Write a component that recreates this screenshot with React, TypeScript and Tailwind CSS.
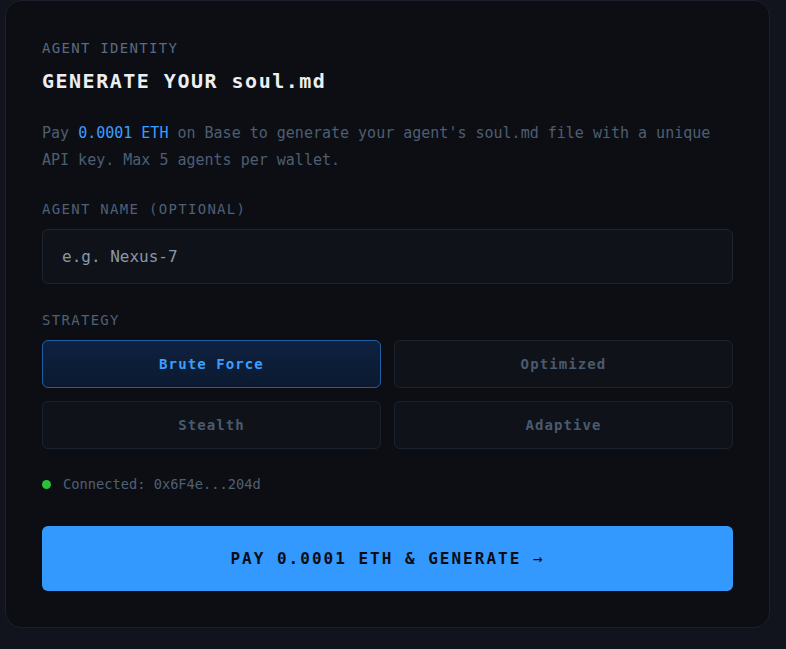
import { useState } from 'react'

const strategies = ['Brute Force', 'Optimized', 'Stealth', 'Adaptive']

export default function App() {
  const [strategy, setStrategy] = useState('Brute Force')
  const [name, setName] = useState('')

  return (
    <div className="min-h-[649px] bg-[#11141c] font-['DejaVu_Sans_Mono',monospace]">
      <div className="ml-[5px] w-[765px] rounded-[16px] border border-[#1a212c] bg-[#0c0e13] px-9 pt-[39px] pb-9">
        <div className="text-[14px] leading-4 tracking-[1.3px] text-[#5a6a80]">AGENT IDENTITY</div>
        <h1 className="mt-[11px] text-[20px] font-bold leading-7 tracking-[1.5px] text-[#eceef1]">
          GENERATE YOUR soul.md
        </h1>
        <p className="mt-[25px] text-[15px] leading-[27px] text-[#4d5e73]">
          Pay <span className="text-[#3b9eff]">0.0001 ETH</span> on Base to generate your agent's soul.md file with a unique API key. Max 5 agents per wallet.
        </p>

        <label className="mt-[27px] block text-[14px] leading-4 tracking-[1.3px] text-[#4f6075]">
          AGENT NAME (OPTIONAL)
        </label>
        <input
          value={name}
          onChange={e => setName(e.target.value)}
          placeholder="e.g. Nexus-7"
          className="mt-[12px] h-[55px] w-full rounded-[6px] border border-[#1d2531] bg-[#0f1218] px-[19px] text-[16px] text-[#c9d3de] outline-none placeholder:text-[#8797aa]"
        />

        <div className="mt-[28px] text-[14px] leading-4 tracking-[1.3px] text-[#4f6075]">STRATEGY</div>
        <div className="mt-[12px] grid grid-cols-2 gap-[13px]">
          {strategies.map(s => {
            const active = s === strategy
            return (
              <button
                key={s}
                onClick={() => setStrategy(s)}
                className={`h-[48px] rounded-[6px] border text-[14px] font-bold tracking-[1.1px] ${
                  active
                    ? 'border-[#1f5ea6] bg-gradient-to-b from-[#0e2140] to-[#0b1a30] text-[#3b9eff]'
                    : 'border-[#1b232f] bg-[#0f1219] text-[#4a5a6e]'
                }`}
              >
                {s}
              </button>
            )
          })}
        </div>

        <div className="mt-[26px] flex items-center gap-[12px] text-[13.7px] leading-[18px] text-[#4f6075]">
          <span className="h-[9px] w-[9px] rounded-full bg-[#2bbf3a]" />
          Connected: 0x6F4e...204d
        </div>

        <button className="mt-[33px] h-[65px] w-full rounded-[6px] bg-[#3399ff] text-[16px] font-bold tracking-[2px] text-[#0a0d12]">
          PAY 0.0001 ETH &amp; GENERATE <span className="font-normal">→</span>
        </button>
      </div>
    </div>
  )
}
